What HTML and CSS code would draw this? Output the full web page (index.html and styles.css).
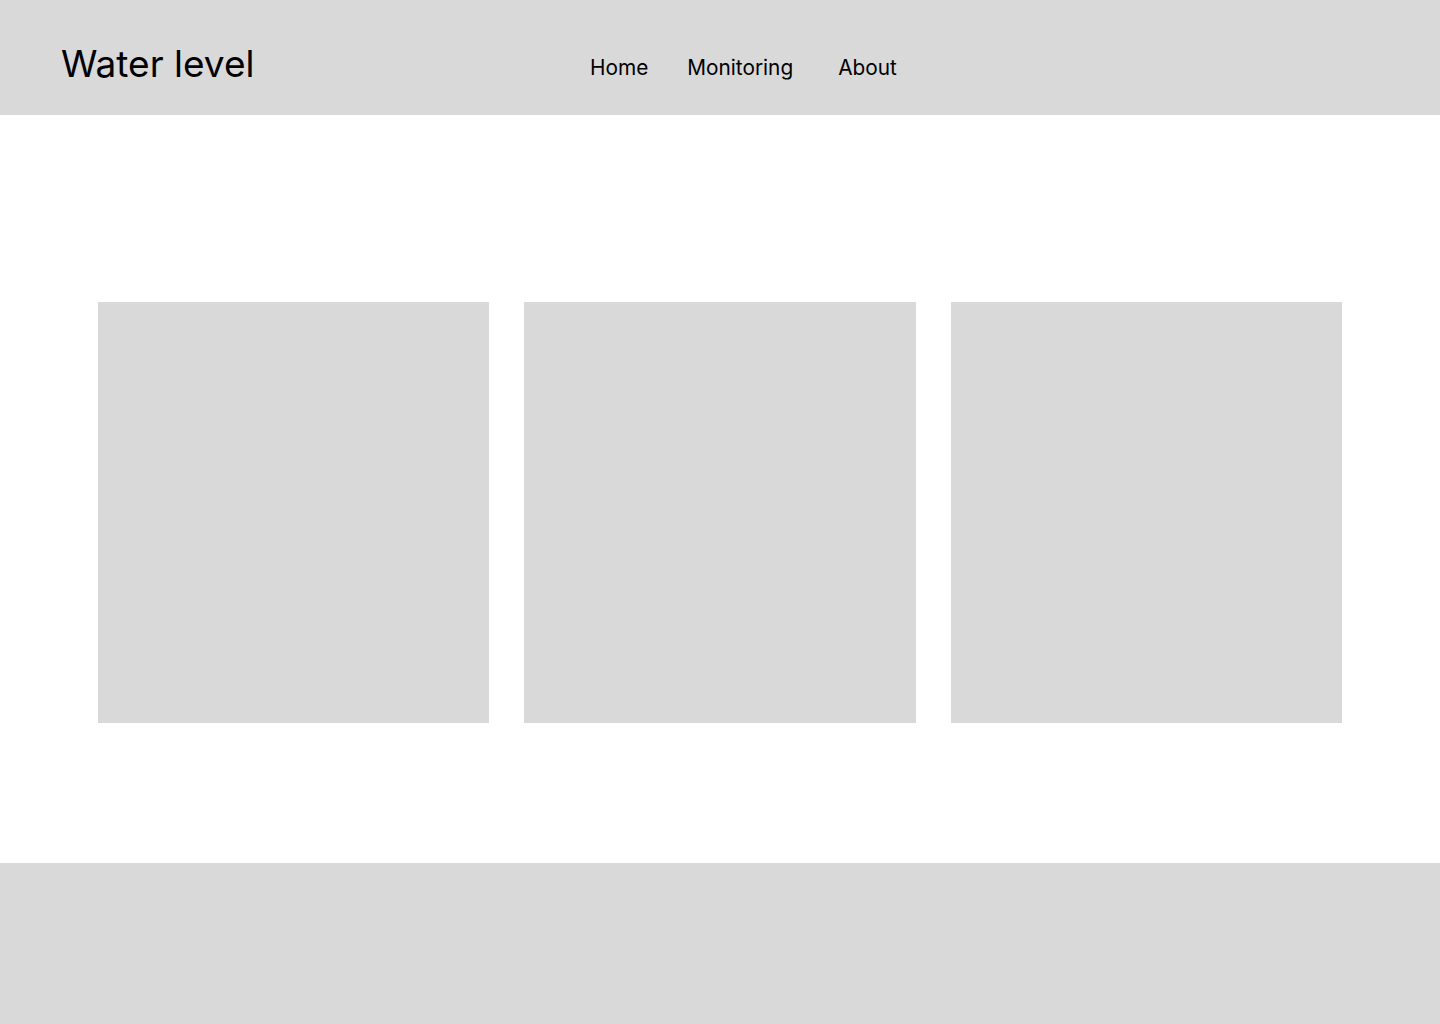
FILE: index.html
```html
<!DOCTYPE html>
<html lang="en">
<head>
<meta charset="utf-8">
<title>Water level</title>
<link rel="stylesheet" href="styles.css">
</head>
<body>
<div class="page">
  <header class="header">
    <div class="brand">Water level</div>
    <nav class="nav">
      <a class="nav-link" href="#">Home</a>
      <a class="nav-link" href="#">Monitoring</a>
      <a class="nav-link nav-link-about" href="#">About</a>
    </nav>
  </header>
  <main class="main">
    <div class="cards">
      <div class="card"></div>
      <div class="card"></div>
      <div class="card"></div>
    </div>
  </main>
  <footer class="footer"></footer>
</div>
</body>
</html>
```

FILE: styles.css
```css
* { box-sizing: border-box; }
html, body { margin: 0; padding: 0; }
body {
  background: #ffffff;
  font-family: Inter, "Noto Sans", sans-serif;
  color: #000000;
}
.page {
  width: 1440px;
  height: 1024px;
  display: flex;
  flex-direction: column;
}
.header {
  height: 115px;
  flex-shrink: 0;
  background: #d9d9d9;
  display: flex;
  align-items: flex-start;
  padding-left: 61px;
}
.brand {
  font-size: 37px;
  font-weight: 400;
  line-height: 37px;
  margin-top: 45px;
  width: 529px;
}
.nav {
  display: flex;
  gap: 39px;
  margin-top: 56px;
}
.nav-link {
  font-size: 20.8px;
  line-height: 24px;
  color: #000000;
  text-decoration: none;
}
.nav-link-about { margin-left: 6px; }
.main {
  flex: 1;
  display: flex;
  justify-content: center;
  padding-top: 187px;
}
.cards {
  display: flex;
  gap: 35px;
}
.card {
  width: 391px;
  height: 421px;
  background: #d9d9d9;
}
.card:nth-child(2) { width: 392px; }
.footer {
  height: 161px;
  flex-shrink: 0;
  background: #d9d9d9;
}
```
